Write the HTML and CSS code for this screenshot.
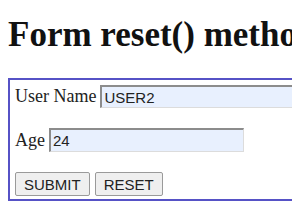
FILE: index.html
```html
<!DOCTYPE html>
<html lang="en">
<head>
<meta charset="UTF-8">
<title>Form reset() method</title>
<link rel="stylesheet" href="styles.css">
</head>
<body>
<h1>Form reset() method</h1>
<form class="user-form" id="myForm">
    <div class="row">
        <label for="username">User Name</label>
        <input type="text" id="username" class="field field-name" value="USER2">
    </div>
    <div class="row">
        <label for="age">Age</label>
        <input type="text" id="age" class="field field-age" value="24">
    </div>
    <div class="row buttons">
        <button type="submit" class="button">SUBMIT</button>
        <button type="reset" class="button">RESET</button>
    </div>
</form>
</body>
</html>
```
FILE: styles.css
```css
body {
    margin: 8px;
    font-family: "Liberation Serif", "Times New Roman", serif;
    font-size: 18px;
    color: #222;
    background-color: #fff;
    white-space: nowrap;
    overflow: hidden;
}
h1 {
    font-size: 35px;
    font-weight: bold;
    margin: 7px 0 23px;
    color: #111;
}
.user-form {
    border: 2px solid #5652c6;
    padding: 5px 5px 3px;
    width: 400px;
}
.row {
    display: flex;
    align-items: center;
    gap: 4px;
    margin-bottom: 20px;
}
.buttons {
    gap: 5px;
    margin-bottom: 0;
}
.field {
    box-sizing: border-box;
    font-family: "Liberation Sans", Arial, sans-serif;
    font-size: 15px;
    color: #222;
    background-color: #e8f0fe;
    border: 2px solid #8c8c8c;
    border-right: 1px solid #dcdcdc;
    border-bottom: 1px solid #dcdcdc;
    padding: 0 2px;
}
.field-name {
    width: 197px;
    height: 23px;
}
.field-age {
    width: 195px;
    height: 24px;
}
.button {
    box-sizing: border-box;
    font-family: "Liberation Sans", Arial, sans-serif;
    font-size: 15px;
    color: #222;
    background-color: #efefef;
    border: 1px solid #9a9a9a;
    border-radius: 2px;
    height: 24px;
    padding: 0 8px;
}
```
